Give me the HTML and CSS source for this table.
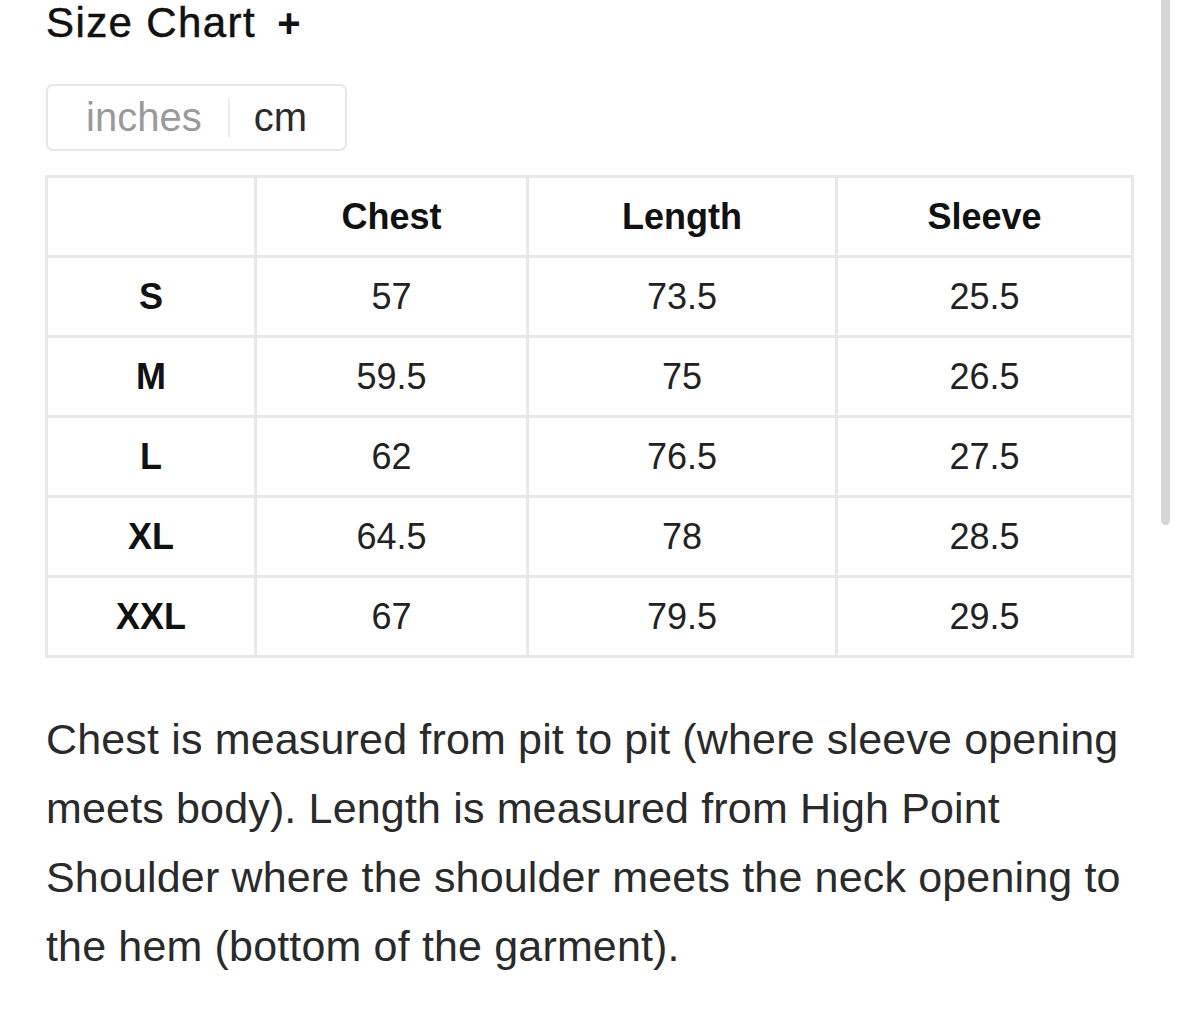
FILE: index.html
```html
<!DOCTYPE html>
<html lang="en">
<head>
<meta charset="utf-8">
<title>Size Chart</title>
<link rel="stylesheet" href="styles.css">
</head>
<body>
<div class="page">
  <h2 class="title">Size Chart <span class="plus">+</span></h2>
  <div class="units">
    <button class="unit unit-off">inches</button>
    <span class="unit-sep"></span>
    <button class="unit unit-on">cm</button>
  </div>
  <table class="chart">
    <colgroup>
      <col class="c-size">
      <col class="c-chest">
      <col class="c-length">
      <col class="c-sleeve">
    </colgroup>
    <thead>
      <tr><th></th><th>Chest</th><th>Length</th><th>Sleeve</th></tr>
    </thead>
    <tbody>
      <tr><th>S</th><td>57</td><td>73.5</td><td>25.5</td></tr>
      <tr><th>M</th><td>59.5</td><td>75</td><td>26.5</td></tr>
      <tr><th>L</th><td>62</td><td>76.5</td><td>27.5</td></tr>
      <tr><th>XL</th><td>64.5</td><td>78</td><td>28.5</td></tr>
      <tr><th>XXL</th><td>67</td><td>79.5</td><td>29.5</td></tr>
    </tbody>
  </table>
  <p class="note">Chest is measured from pit to pit (where sleeve opening meets body). Length is measured from High Point Shoulder where the shoulder meets the neck opening to the hem (bottom of the garment).</p>
</div>
<div class="scrollbar"></div>
</body>
</html>
```

FILE: styles.css
```css
html, body {
  margin: 0;
  padding: 0;
  background: #ffffff;
}

body {
  font-family: "Liberation Sans", Arial, Helvetica, sans-serif;
  color: #222;
  overflow: hidden;
}

.page {
  padding: 0 0 0 45px;
  width: 1089px;
}

.title {
  margin: 0;
  font-size: 42px;
  line-height: 46px;
  font-weight: normal;
  letter-spacing: 1.4px;
  color: #111;
  padding-left: 1px;
  -webkit-text-stroke: 0.5px #111;
}

.plus {
  display: inline-block;
  margin-left: 8px;
  font-weight: bold;
  font-size: 40px;
  -webkit-text-stroke: 0;
}

.units {
  margin-top: 38px;
  margin-left: 1px;
  display: inline-flex;
  align-items: center;
  height: 63px;
  padding: 0 12px;
  border: 2px solid #e6e6e6;
  border-radius: 7px;
}

.unit {
  font-family: inherit;
  font-size: 40px;
  line-height: 63px;
  background: none;
  border: none;
  margin: 0;
  padding: 0 26px;
  cursor: pointer;
}

.unit-off {
  color: #9a9a9a;
}

.unit-on {
  color: #2b2b2b;
  padding: 0 26px 0 24px;
}

.unit-sep {
  width: 2px;
  height: 39px;
  background: #ececec;
}

.chart {
  margin-top: 24px;
  width: 1086px;
  border-collapse: collapse;
  table-layout: fixed;
}

.c-size { width: 209px; }
.c-chest { width: 272px; }
.c-length { width: 309px; }
.c-sleeve { width: 296px; }

.chart th,
.chart td {
  border: 3px solid #e8e8e8;
  height: 77px;
  padding: 0;
  text-align: center;
  vertical-align: middle;
  font-size: 36px;
}

.chart th {
  font-weight: bold;
  color: #111;
}

.chart td {
  color: #222;
}

.note {
  margin: 47px 0 0 1px;
  font-size: 43px;
  line-height: 69px;
  letter-spacing: 0.16px;
  color: #2a2a2a;
}

.scrollbar {
  position: fixed;
  top: -20px;
  left: 1161px;
  width: 9px;
  height: 545px;
  background: #d6d6d6;
  border-radius: 5px;
}
```
